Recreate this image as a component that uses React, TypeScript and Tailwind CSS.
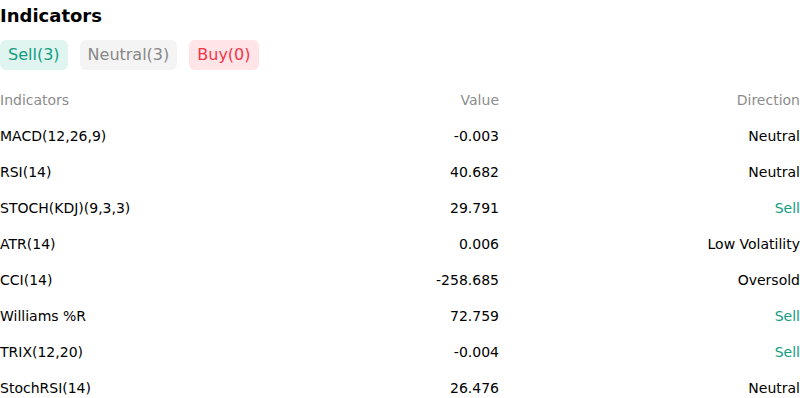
import { Fragment } from "react";

const rows = [
  { name: "MACD(12,26,9)", value: "-0.003", dir: "Neutral", tone: "neutral" },
  { name: "RSI(14)", value: "40.682", dir: "Neutral", tone: "neutral" },
  { name: "STOCH(KDJ)(9,3,3)", value: "29.791", dir: "Sell", tone: "sell" },
  { name: "ATR(14)", value: "0.006", dir: "Low Volatility", tone: "neutral" },
  { name: "CCI(14)", value: "-258.685", dir: "Oversold", tone: "neutral" },
  { name: "Williams %R", value: "72.759", dir: "Sell", tone: "sell" },
  { name: "TRIX(12,20)", value: "-0.004", dir: "Sell", tone: "sell" },
  { name: "StochRSI(14)", value: "26.476", dir: "Neutral", tone: "neutral" },
];

export default function App() {
  return (
    <div className="w-[800px] h-[398px] overflow-hidden bg-white font-['DejaVu_Sans',sans-serif] text-black">
      <h2 className="pt-[4px] text-[18px] font-bold leading-[23px]">Indicators</h2>

      <div className="mt-[13px] flex gap-3">
        <span className="h-[30px] rounded-md bg-[#e0f5f0] px-2 text-[16px] leading-[30px] text-[#139c82]">Sell(3)</span>
        <span className="h-[30px] rounded-md bg-[#f4f4f4] px-2 text-[16px] leading-[30px] text-[#888888]">Neutral(3)</span>
        <span className="h-[30px] rounded-md bg-[#ffe4e8] px-2 text-[16px] leading-[30px] text-[#f23645]">Buy(0)</span>
      </div>

      <div className="mt-[18px] grid grid-cols-[1fr_200px_301px] text-[14px]">
        <div className="h-[24px] leading-[24px] text-[#8c8c8c]">Indicators</div>
        <div className="h-[24px] text-right leading-[24px] text-[#8c8c8c]">Value</div>
        <div className="h-[24px] text-right leading-[24px] text-[#8c8c8c]">Direction</div>
        {rows.map((r) => (
          <Fragment key={r.name}>
            <div className="h-[36px] leading-[48px]">{r.name}</div>
            <div className="h-[36px] text-right leading-[48px]">{r.value}</div>
            <div
              className={
                "h-[36px] text-right leading-[48px] " +
                (r.tone === "sell" ? "text-[#139c82]" : "text-black")
              }
            >
              {r.dir}
            </div>
          </Fragment>
        ))}
      </div>
    </div>
  );
}
